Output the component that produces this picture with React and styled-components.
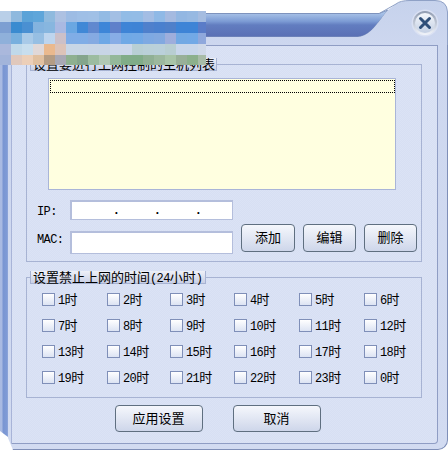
import React from "react";
import styled, { createGlobalStyle } from "styled-components";

const GlobalStyle = createGlobalStyle`
  html, body {
    margin: 0;
    padding: 0;
    background: #fff;
  }
  * {
    box-sizing: border-box;
  }
`;

const Page = styled.div`
  position: relative;
  width: 448px;
  height: 450px;
  overflow: hidden;
  background: #fff;
  color: #000;
  font-family: "Noto Sans CJK SC", "Liberation Sans", sans-serif;
  font-size: 13px;
  line-height: 13px;
`;

const TitleBar = styled.div`
  position: relative;
  height: 45px;
`;

const TitleSkin = styled.svg`
  display: block;
`;

const CloseButton = styled.svg`
  position: absolute;
  top: 8px;
  left: 410px;
`;

const Mosaic = styled.div`
  position: absolute;
  top: 11px;
  left: 0;
  display: grid;
  grid-template-columns: repeat(18, 11px) 8px;
  grid-template-rows: repeat(4, 11px) 10px;
`;

const Tile = styled.div`
  background: ${(p) => p.$c};
`;

const Body = styled.div`
  display: flex;
  height: 405px;
`;

const Strip = styled.div`
  width: 8px;
  height: 392px;
  background: linear-gradient(90deg, #a9bae2 0, #a9bae2 2px, #7995d2 3px, #7f9bd6 7px, #95a9da 8px);
  clip-path: polygon(0 0, 100% 0, 100% 100%, 0 calc(100% - 6px));
`;

const Frame = styled.div`
  flex: 1;
  display: flex;
  padding: 0 9px 5px 3px;
  background: linear-gradient(180deg, #cdd7ef, #d2dbf1);
  border-right: 1px solid #7f8fb8;
  border-bottom: 1px solid #7f8fb8;
  border-bottom-right-radius: 10px;
  clip-path: polygon(0 0, 100% 0, 100% 100%, 5px 100%, 0 calc(100% - 12px));
`;

const Panel = styled.div`
  flex: 1;
  padding: 18px 15px 0 14px;
  background: repeating-conic-gradient(#d7dff3 0 25%, #dbe3f5 0 50%) 0 0 / 2px 2px;
  border: 1px solid #8f9dc4;
  border-left-color: #a8b4d8;
  border-bottom-right-radius: 4px;
`;

const Group = styled.section`
  border: 1px solid #a7b3d3;
  margin-bottom: ${(p) => p.$after}px;
`;

const Legend = styled.div`
  width: ${(p) => p.$w}px;
  height: 13px;
  margin: -7px 0 0 3px;
  padding-left: 2px;
  white-space: nowrap;
  background: linear-gradient(180deg, #eef0f8, #c9d0e6);
  border: 1px solid #a7b3d3;
  border-top: 0;
  line-height: 12px;
`;

const Num = styled.span`
  font-family: "Liberation Mono", monospace;
  font-size: 12px;
  letter-spacing: -0.6px;
`;

const ListBox = styled.div`
  width: 348px;
  height: 112px;
  margin: 7px 0 0 21px;
  padding: 1px 0 0 1px;
  background: #ffffe0;
  border: 1px solid #a9b5d8;
`;

const SelectedRow = styled.div`
  height: 13px;
  border: 1px dotted #000;
`;

const FormRow = styled.div`
  display: flex;
  align-items: flex-end;
  margin: 10px 0 0 10px;
  padding-bottom: 7px;
`;

const Fields = styled.div`
  display: flex;
  flex-direction: column;
  gap: 11px;
`;

const Field = styled.label`
  display: flex;
  align-items: center;
`;

const FieldName = styled.span`
  width: 33px;
  margin: ${(p) => p.$nudge};
  font-family: "Liberation Mono", monospace;
  font-size: 12px;
  letter-spacing: -0.6px;
`;

const Input = styled.div`
  display: flex;
  width: 163px;
  height: ${(p) => p.$h}px;
  padding-left: 7px;
  background: #fff;
  border: 1px solid #b4bedc;
  border-left-width: 2px;
  border-top-width: 2px;
`;

const Octet = styled.span`
  width: 41px;
  text-align: right;
  font-family: "Liberation Mono", monospace;
  font-size: 12px;
  font-weight: 700;
  line-height: 18px;
`;

const Actions = styled.div`
  display: flex;
  gap: 8px;
  margin: 0 0 2px 8px;
`;

const Button = styled.button`
  width: ${(p) => p.$w}px;
  height: ${(p) => p.$h}px;
  padding: 0 0 3px;
  font: inherit;
  color: #000;
  background: linear-gradient(180deg, #f5f7fc, #ced6ea);
  border: 1px solid #5f6f80;
  border-radius: 4px;
`;

const Hours = styled.div`
  display: grid;
  grid-template-columns: 65px 63px 64px 65px 65px 1fr;
  grid-auto-rows: 26px;
  margin: 9px 0 0 15px;
`;

const Hour = styled.label`
  display: flex;
  gap: 3px;
  height: 13px;
  align-items: center;
`;

const Box = styled.span`
  width: 13px;
  height: 13px;
  background: linear-gradient(180deg, #fff, #dce3f3);
  border: 1px solid #7f8fb8;
`;

const Footer = styled.div`
  display: flex;
  justify-content: center;
  gap: 30px;
  padding-right: 13px;
`;

const tiles = [
  "#b9cfe8 #8fb9de #5ba3d8 #5fa6da #8fbade #adc1e2 #9dbce4 #9fbfe6 #a0c0e6 #93bbe4 #a3bfe4 #92bce6 #93bce6 #a3bde4 #8fb9e6 #a5bae0 #93b7e2 #97b9e2 #a5bce0",
  "#7d9fd2 #3a8bd0 #4a90d2 #83b3df #87b6df #a9b9e2 #6aa7e2 #4088d6 #6088cf #3d86d8 #5f80ca #3e84d6 #3e83d5 #4f80cc #4a80ce #4f80ca #3e84d6 #3e84d6 #5a7cc8",
  "#8fb0da #78b0de #a9cae8 #97bfe3 #bed5ee #ccc0c8 #80ade6 #80ade6 #85aae2 #6ea8e6 #88ade6 #70a9e6 #72a9e6 #7ea9e2 #82a9e0 #9eaedc #72a9e4 #72a9e6 #8fa8dc",
  "#aab8dc #c0d9ea #c8deee #e0d8d8 #eab98e #dcc3b8 #c8d6e6 #c8d6e6 #c8d5e6 #c8d5e6 #cbd7ea #cbd7ea #b8cfd4 #bad0d8 #bad0da #b8ced2 #c8d6ea #c8d6ea #ced8e8",
  "#a2b4da #e0c8bc #eccfb8 #e0c0a0 #b49c84 #a8a8b4 #8eb090 #84a58c #9cbca0 #b0c8b4 #94b89a #80ac88 #80ac88 #90b094 #9cb89e #a8c4a8 #98b098 #8cb08c #a8bca8",
].flatMap((row) => row.split(" "));

const hours = [
  1, 2, 3, 4, 5, 6, 7, 8, 9, 10, 11, 12, 13, 14, 15, 16, 17, 18, 19, 20, 21, 22, 23, 0,
];

export default function App() {
  return (
    <Page>
      <GlobalStyle />
      <TitleBar>
        <TitleSkin width="448" height="45" viewBox="0 0 448 45">
          <defs>
            <linearGradient id="bar" x1="0" y1="13" x2="0" y2="37" gradientUnits="userSpaceOnUse">
              <stop offset="0" stopColor="#a9c3e8" />
              <stop offset="0.35" stopColor="#7c9bd4" />
              <stop offset="0.5" stopColor="#627dc0" />
              <stop offset="1" stopColor="#5a6fb4" />
            </linearGradient>
            <linearGradient id="hump" x1="0" y1="0" x2="0" y2="45" gradientUnits="userSpaceOnUse">
              <stop offset="0" stopColor="#c6d2ec" />
              <stop offset="1" stopColor="#cdd7ef" />
            </linearGradient>
          </defs>
          <path d="M0 13.5H379L388 10C378 22 371 36 358 37H0Z" fill="url(#bar)" stroke="#7e93bd" strokeWidth="1" />
          <path
            d="M358 37C371 36 378 22 388 10L396 4Q400 .5 410 .5H435Q447 .5 447.5 12V45H0V37Z"
            fill="url(#hump)"
          />
          <path d="M380 13L396 4Q400 .5 410 .5H435Q447 .5 447.5 12V45" fill="none" stroke="#8fa1c6" />
        </TitleSkin>
        <CloseButton width="30" height="30" viewBox="0 0 30 30">
          <defs>
            <linearGradient id="ring" x1="0" y1="0" x2="0" y2="1">
              <stop offset="0" stopColor="#8f9bb0" />
              <stop offset="1" stopColor="#f2f5fb" />
            </linearGradient>
            <linearGradient id="cap" x1="0" y1="0" x2="0" y2="1">
              <stop offset="0" stopColor="#f4f7fb" />
              <stop offset="1" stopColor="#c4d0e4" />
            </linearGradient>
          </defs>
          <circle cx="15" cy="15" r="13.5" fill="#dfe6f5" opacity="0.7" />
          <circle cx="15" cy="15" r="12" fill="url(#ring)" />
          <circle cx="15" cy="15" r="10" fill="url(#cap)" />
          <path d="M10.5 10.5L19.5 19.5M19.5 10.5L10.5 19.5" stroke="#2f4f78" strokeWidth="3" strokeLinecap="round" />
        </CloseButton>
      </TitleBar>
      <Body>
        <Strip />
        <Frame>
          <Panel>
            <Group $after={15}>
              <Legend $w={187}>设置要进行上网控制的主机列表</Legend>
              <ListBox>
                <SelectedRow />
              </ListBox>
              <FormRow>
                <Fields>
                  <Field>
                    <FieldName $nudge="5px 0 0">IP:</FieldName>
                    <Input $h={20}>
                      <Octet>.</Octet>
                      <Octet>.</Octet>
                      <Octet>.</Octet>
                    </Input>
                  </Field>
                  <Field>
                    <FieldName $nudge="0 0 4px">MAC:</FieldName>
                    <Input $h={23} />
                  </Field>
                </Fields>
                <Actions>
                  <Button $w={54} $h={28}>添加</Button>
                  <Button $w={53} $h={28}>编辑</Button>
                  <Button $w={53} $h={28}>删除</Button>
                </Actions>
              </FormRow>
            </Group>
            <Group $after={7}>
              <Legend $w={176}>
                设置禁止上网的时间<Num>(24</Num>小时<Num>)</Num>
              </Legend>
              <Hours>
                {hours.map((h) => (
                  <Hour key={h}>
                    <Box />
                    <span>
                      <Num>{h}</Num>时
                    </span>
                  </Hour>
                ))}
              </Hours>
            </Group>
            <Footer>
              <Button $w={88} $h={27}>应用设置</Button>
              <Button $w={88} $h={27}>取消</Button>
            </Footer>
          </Panel>
        </Frame>
      </Body>
      <Mosaic>
        {tiles.map((c, i) => (
          <Tile key={i} $c={c} />
        ))}
      </Mosaic>
    </Page>
  );
}
